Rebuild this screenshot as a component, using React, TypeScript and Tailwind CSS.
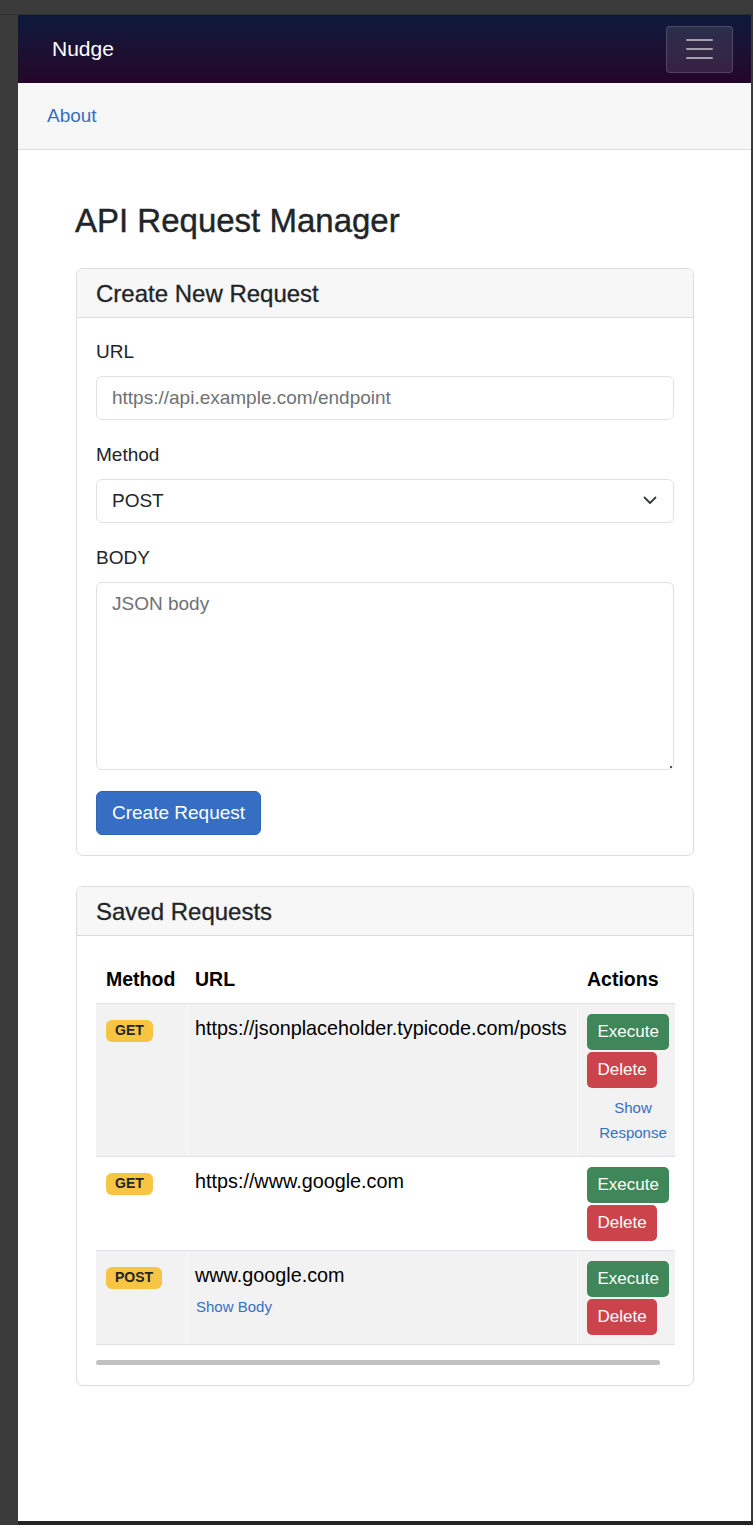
import React from "react";

const rows = [
  { method: "GET", url: "https://jsonplaceholder.typicode.com/posts", striped: true, showResponse: true, showBody: false },
  { method: "GET", url: "https://www.google.com", striped: false, showResponse: false, showBody: false },
  { method: "POST", url: "www.google.com", striped: true, showResponse: false, showBody: true },
];

export default function App() {
  return (
    <div
      className="w-[753px] h-[1525px] bg-[#3b3b3b] flex flex-col"
      style={{ fontFamily: '"Liberation Sans", Arial, Helvetica, sans-serif' }}
    >
      <div className="h-[15px] shrink-0 border-b border-[#303030]" />
      <div className="ml-[18px] mr-[2px] h-[1506px] bg-white flex flex-col">
        {/* Navbar */}
        <div className="h-[68px] shrink-0 bg-gradient-to-b from-[#0a1a3c] to-[#24052a] flex items-center justify-between pl-[34px] pr-[18px]">
          <span className="text-white text-[21px] leading-[28px]">Nudge</span>
          <div className="w-[67px] h-[47px] rounded-[4px] border border-white/15 bg-white/10 flex flex-col items-center justify-center gap-[7px]">
            <div className="w-[27px] h-[2px] rounded-full bg-[#a49eae]" />
            <div className="w-[27px] h-[2px] rounded-full bg-[#a49eae]" />
            <div className="w-[27px] h-[2px] rounded-full bg-[#a49eae]" />
          </div>
        </div>
        {/* About bar */}
        <div className="h-[67px] shrink-0 bg-[#f7f7f7] border-b border-[#dcdcdc] flex items-center pl-[29px]">
          <span className="text-[#3470c4] text-[19px] leading-[28px]">About</span>
        </div>

        {/* Main */}
        <div className="pl-[58px] pr-[57px] pt-[50px]">
          <h1 className="text-[33px] leading-[41px] text-[#212529] font-medium [-webkit-text-stroke:0.4px_#212529] -ml-[1px] mb-[27px]">
            API Request Manager
          </h1>

          {/* Create card */}
          <div className="border border-[#dcdcdc] rounded-[7px] overflow-hidden">
            <div className="bg-[#f7f7f7] border-b border-[#dcdcdc] px-[19px] py-[9.5px]">
              <h2 className="text-[24px] leading-[29px] text-[#212529] [-webkit-text-stroke:0.3px_#212529]">Create New Request</h2>
            </div>
            <div className="px-[19px] pt-[19px] pb-[20px]">
              <label className="block text-[19px] leading-[28px] pt-[1px] text-[#212529] mb-[10px]">URL</label>
              <input
                className="block w-full h-[44px] border border-[#dee2e6] rounded-[6px] px-[15px] text-[19px] text-[#212529] placeholder:text-[#6e7175] outline-none mb-[20px]"
                placeholder="https://api.example.com/endpoint"
              />
              <label className="block text-[19px] leading-[28px] pt-[1px] text-[#212529] mb-[10px]">Method</label>
              <div className="relative mb-[20px]">
                <div className="w-full h-[44px] border border-[#dee2e6] rounded-[6px] px-[15px] flex items-center text-[19px] text-[#212529]">
                  POST
                </div>
                <svg
                  className="absolute right-[17px] top-[17px]"
                  width="14"
                  height="9"
                  viewBox="0 0 14 9"
                  fill="none"
                >
                  <path d="M1.5 1.5 7 7l5.5-5.5" stroke="#343a40" strokeWidth="1.8" strokeLinecap="round" strokeLinejoin="round" />
                </svg>
              </div>
              <label className="block text-[19px] leading-[28px] pt-[1px] text-[#212529] mb-[10px]">BODY</label>
              <div className="relative">
                <textarea
                  className="block w-full h-[188px] resize-none border border-[#dee2e6] rounded-[6px] px-[15px] pt-[7px] text-[19px] leading-[28px] text-[#212529] placeholder:text-[#6e7175] outline-none"
                  placeholder="JSON body"
                />
                <div className="absolute right-[2px] bottom-[2px] w-[2px] h-[2px] bg-[#555]" />
              </div>
              <button className="mt-[21px] h-[44px] px-[15px] rounded-[6px] bg-[#356ec2] border border-[#2f65b4] text-white text-[19px]">
                Create Request
              </button>
            </div>
          </div>

          {/* Saved card */}
          <div className="mt-[30px] border border-[#dcdcdc] rounded-[7px] overflow-hidden">
            <div className="bg-[#f7f7f7] border-b border-[#dcdcdc] px-[19px] py-[9.5px]">
              <h2 className="text-[24px] leading-[29px] text-[#212529] [-webkit-text-stroke:0.3px_#212529]">Saved Requests</h2>
            </div>
            <div className="px-[19px] pt-[19px] pb-[20px]">
              <div className="overflow-hidden w-[579px]">
                <table className="table-fixed border-collapse w-[594px] text-black text-[19.8px]">
                  <colgroup>
                    <col className="w-[91px]" />
                    <col className="w-[390px]" />
                    <col className="w-[113px]" />
                  </colgroup>
                  <thead>
                    <tr>
                      <th className="text-left font-bold text-[19.5px] leading-[28px] py-[10px] pl-[10px] pr-[8px]">Method</th>
                      <th className="text-left font-bold text-[19.5px] leading-[28px] py-[10px] pl-[8px] pr-[8px]">URL</th>
                      <th className="text-left font-bold text-[19.5px] leading-[28px] py-[10px] pl-[10px] pr-[8px]">Actions</th>
                    </tr>
                  </thead>
                  <tbody>
                    {rows.map((r, i) => (
                      <tr key={i} className={`border-t border-[#dee2e6] ${i === rows.length - 1 ? "border-b" : ""} ${r.striped ? "bg-[#f2f2f2]" : "bg-white"}`}>
                        <td className="align-top pt-[10px] pb-[9px] pl-[10px] pr-[8px]">
                          <span className="mt-[4px] inline-flex h-[22px] items-center px-[9px] rounded-[6px] bg-[#f8c443] text-[#212529] text-[14px] font-bold">
                            {r.method}
                          </span>
                        </td>
                        <td className={`align-top pt-[10px] pb-[9px] pl-[8px] pr-[8px] ${r.striped ? "shadow-[inset_1px_0_0_#f9f9f9]" : ""}`}>
                          <div className="leading-[28px]">{r.url}</div>
                          {r.showBody && (
                            <div className="mt-[7px] ml-[1px] text-[15px] leading-[21px] text-[#3470c4]">Show Body</div>
                          )}
                        </td>
                        <td className={`align-top pt-[10px] pb-[9px] pl-[10px] pr-[8px] ${r.striped ? "shadow-[inset_1px_0_0_#f9f9f9]" : ""}`}>
                          <div className="flex flex-col items-start gap-[2px]">
                            <button className="h-[36px] px-[10.5px] rounded-[5px] bg-[#3f8658] text-white text-[17px]">Execute</button>
                            <button className="h-[36px] px-[10.5px] rounded-[5px] bg-[#cc444b] text-white text-[17px]">Delete</button>
                          </div>
                          {r.showResponse && (
                            <div className="mt-[7px] mb-[2px] w-[92px] text-center text-[15px] leading-[25px] text-[#3470c4]">
                              Show
                              <br />
                              Response
                            </div>
                          )}
                        </td>
                      </tr>
                    ))}
                  </tbody>
                </table>
              </div>
              <div className="mt-[15px] h-[5px] w-[564px] rounded-full bg-[#c1c1c1]" />
            </div>
          </div>
        </div>
      </div>
      <div className="ml-[18px] flex-1 bg-[#242424]" />
    </div>
  );
}
